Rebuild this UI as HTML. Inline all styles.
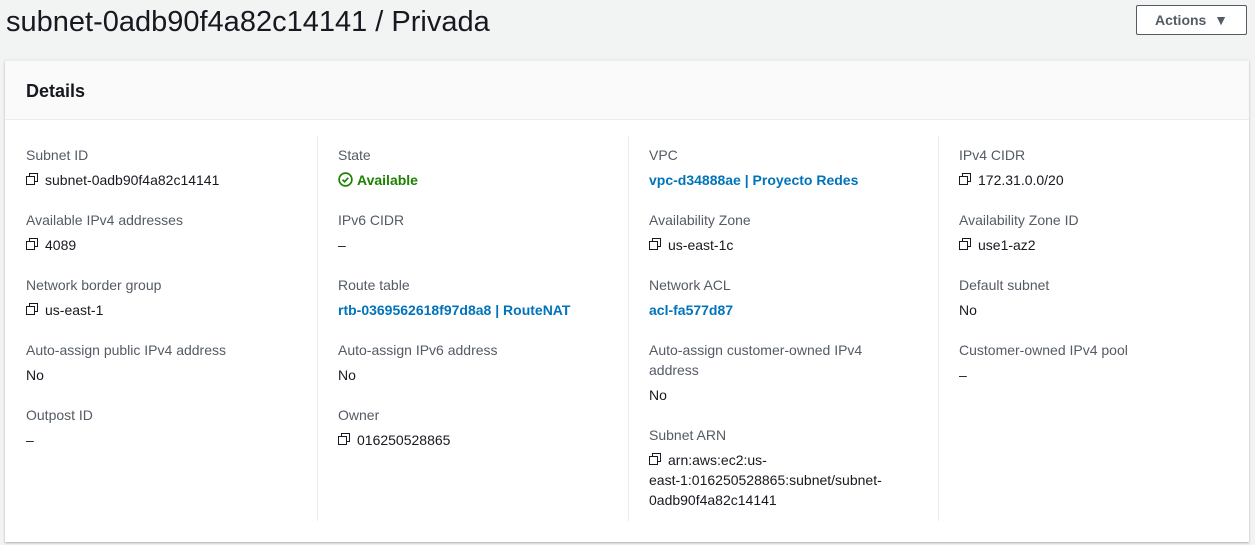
<!DOCTYPE html>
<html><head><style>
body{margin:0;width:1255px;height:545px;background:#f2f3f3;font-family:"Liberation Sans",Arial,sans-serif;color:#16191f;position:relative;overflow:hidden}
h1{position:absolute;left:6px;top:3px;margin:0;font-size:29px;font-weight:400;line-height:38px}
.btn{position:absolute;left:1136px;top:5px;width:111px;height:30px;border:1px solid #545b64;border-radius:2px;background:#fff;box-sizing:border-box;font-weight:700;font-size:14px;color:#545b64;line-height:28px;text-align:center}
.panel{position:absolute;left:5px;top:60px;width:1244px;height:481px;background:#fff;box-shadow:0 1px 2px rgba(0,28,36,.3);border-top:1px solid #eaeded}
.hd{height:58px;background:#fafafa;border-bottom:1px solid #eaeded;font-weight:700;font-size:18px;line-height:60px;padding-left:21px}
.col{position:absolute;top:84px;width:270px;font-size:14px;line-height:20px}
.div{position:absolute;top:75px;width:1px;height:385px;background:#eaeded}
.l{color:#545b64}
.v{margin-bottom:20px;margin-top:5px}
.a{color:#0073bb;font-weight:700}
.g{color:#1d8102;font-weight:700}
.c{display:inline-block;width:13px;height:13px;position:relative;vertical-align:-1px;margin-right:6px}
.c:before{content:"";position:absolute;left:3px;top:0;width:7px;height:7px;border:1.5px solid #16191f}
.c:after{content:"";position:absolute;left:0;top:3px;width:7px;height:7px;border:1.5px solid #16191f;background:#fff}
</style></head><body>
<h1>subnet-0adb90f4a82c14141 / Privada</h1>
<div class="btn">Actions &nbsp;▼</div>
<div class="panel">
<div class="hd">Details</div>
<div class="div" style="left:312px"></div>
<div class="div" style="left:623px"></div>
<div class="div" style="left:933px"></div>
<div class="col" style="left:21px">
<div class="l">Subnet ID</div><div class="v"><span class="c"></span>subnet-0adb90f4a82c14141</div>
<div class="l">Available IPv4 addresses</div><div class="v"><span class="c"></span>4089</div>
<div class="l">Network border group</div><div class="v"><span class="c"></span>us-east-1</div>
<div class="l">Auto-assign public IPv4 address</div><div class="v">No</div>
<div class="l">Outpost ID</div><div class="v">–</div>
</div>
<div class="col" style="left:333px">
<div class="l">State</div><div class="v g"><svg width="15" height="15" viewBox="0 0 16 16" style="vertical-align:-2px;margin-right:4px"><circle cx="8" cy="8" r="6.8" fill="none" stroke="#1d8102" stroke-width="1.8"/><path d="M4.8 8.2l2.2 2.2 4-4.2" fill="none" stroke="#1d8102" stroke-width="1.8"/></svg>Available</div>
<div class="l">IPv6 CIDR</div><div class="v">–</div>
<div class="l">Route table</div><div class="v a">rtb-0369562618f97d8a8 | RouteNAT</div>
<div class="l">Auto-assign IPv6 address</div><div class="v">No</div>
<div class="l">Owner</div><div class="v"><span class="c"></span>016250528865</div>
</div>
<div class="col" style="left:644px;width:235px">
<div class="l">VPC</div><div class="v a">vpc-d34888ae | Proyecto Redes</div>
<div class="l">Availability Zone</div><div class="v"><span class="c"></span>us-east-1c</div>
<div class="l">Network ACL</div><div class="v a">acl-fa577d87</div>
<div class="l">Auto-assign customer-owned IPv4 address</div><div class="v">No</div>
<div class="l">Subnet ARN</div><div class="v" style="width:248px"><span class="c"></span>arn:aws:ec2:us-<br>east-1:016250528865:subnet/subnet-<br>0adb90f4a82c14141</div>
</div>
<div class="col" style="left:954px">
<div class="l">IPv4 CIDR</div><div class="v"><span class="c"></span>172.31.0.0/20</div>
<div class="l">Availability Zone ID</div><div class="v"><span class="c"></span>use1-az2</div>
<div class="l">Default subnet</div><div class="v">No</div>
<div class="l">Customer-owned IPv4 pool</div><div class="v">–</div>
</div>
</div>
</body></html>
